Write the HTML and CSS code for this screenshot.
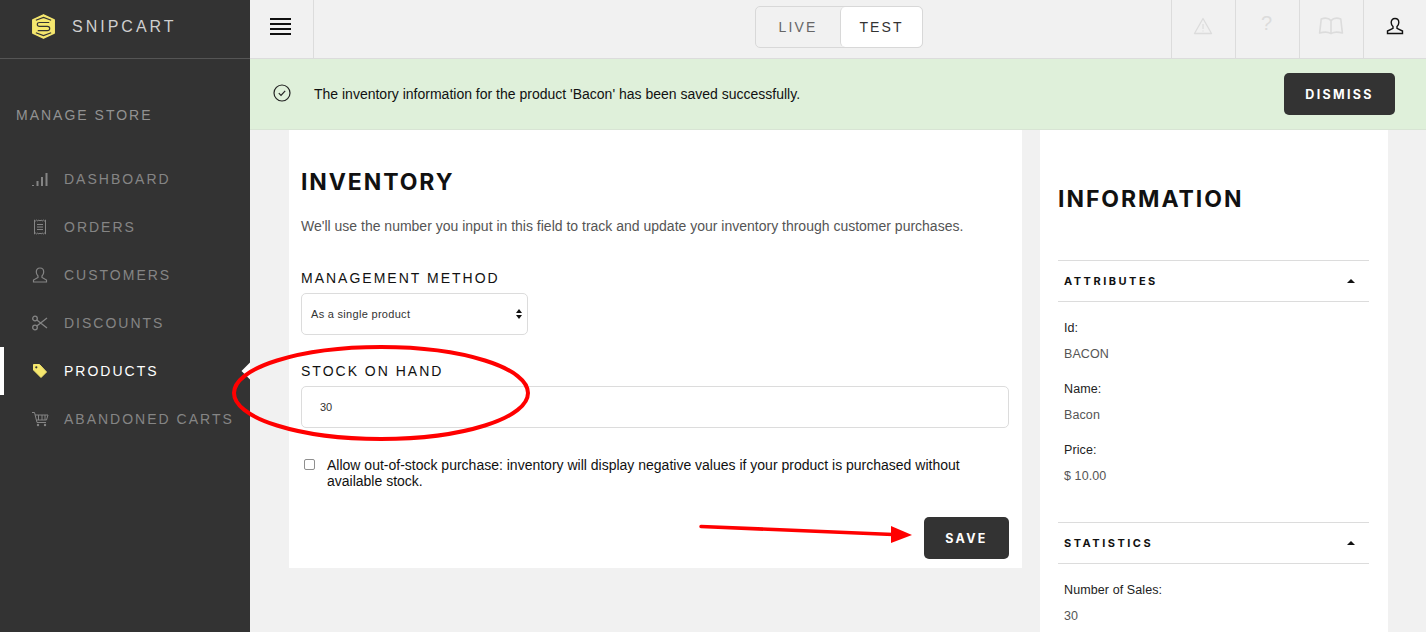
FILE: index.html
```html
<!DOCTYPE html>
<html lang="en">
<head>
<meta charset="utf-8">
<title>Snipcart</title>
<link rel="stylesheet" href="styles.css">
</head>
<body>
<div class="app">
  <aside class="sidebar">
    <div class="brand">
      <svg class="brand-logo" viewBox="0 0 24 26" width="23" height="25"><path d="M12 0.800 L23.200 6.200 V19.800 L12 25.200 L0.800 19.800 V6.200 Z" fill="#f5e76e" stroke="#f5e76e" stroke-width="1.500" stroke-linejoin="round"/><path d="M18 8.800 H8 Q5.500 8.800 5.500 10.800 Q5.500 12.800 8 12.800 H16 Q18.500 12.800 18.500 15 Q18.500 17.300 16 17.300 H6 M4 6.500 L12 3.500 L20 6.500 M4 19.500 L12 22.500 L20 19.500" fill="none" stroke="#333" stroke-width="1.200"/></svg>
      <span class="brand-name">SNIPCART</span>
    </div>
    <div class="side-title">MANAGE STORE</div>
    <nav class="nav">
      <a class="nav-item"><svg class="nav-icon" viewBox="0 0 18 18"><path d="M2 15v1M6.500 11v5M11 7v9M15.500 3v13" stroke="currentColor" stroke-width="2" fill="none"/></svg>DASHBOARD</a>
      <a class="nav-item"><svg class="nav-icon" viewBox="0 0 18 18"><path d="M3.500 2l1.100 1 1.100-1 1.100 1 1.100-1 1.100 1 1.100-1 1.100 1 1.100-1 1.100 1 1.100-1v14l-1.100-1-1.100 1-1.100-1-1.100 1-1.100-1-1.100 1-1.100-1-1.100 1-1.100-1-1.100 1z M6 6.500h6M6 9h6M6 11.500h6" fill="none" stroke="currentColor" stroke-width="1"/></svg>ORDERS</a>
      <a class="nav-item"><svg class="nav-icon" viewBox="0 0 18 18"><path d="M9 2c-2.500 0-3.700 1.800-3.700 4 0 1.800.7 3 1.700 4v1.500L2.500 14v2h13v-2L11 11.500V10c1-1 1.700-2.200 1.700-4 0-2.200-1.200-4-3.700-4z" fill="none" stroke="currentColor" stroke-width="1.200"/></svg>CUSTOMERS</a>
      <a class="nav-item"><svg class="nav-icon" viewBox="0 0 18 18"><circle cx="4" cy="4.500" r="2.300" fill="none" stroke="currentColor" stroke-width="1.300"/><circle cx="4" cy="13.500" r="2.300" fill="none" stroke="currentColor" stroke-width="1.300"/><path d="M5.800 6L16 14M5.800 12L16 4" stroke="currentColor" stroke-width="1.300" fill="none"/></svg>DISCOUNTS</a>
      <a class="nav-item nav-active"><svg class="nav-icon" viewBox="0 0 18 18"><path d="M2.500 2.500h6l7 7.500-5.500 5.500-7.500-7.500z" fill="#f5e76e" stroke="#f5e76e" stroke-linejoin="round"/><circle cx="5.300" cy="5.300" r="1.100" fill="#333"/></svg>PRODUCTS</a>
      <a class="nav-item"><svg class="nav-icon" viewBox="0 0 18 18"><path d="M1 2.500h2.500L6 12.500h9M4 5h13l-1.500 5H5.500M7.500 5v5M11 5v5M14 5v5" fill="none" stroke="currentColor" stroke-width="1"/><circle cx="7" cy="15" r="1.200" fill="currentColor"/><circle cx="14" cy="15" r="1.200" fill="currentColor"/></svg>ABANDONED CARTS</a>
    </nav>
  </aside>
  <div class="main">
    <header class="topbar">
      <button class="burger" aria-label="Menu"><span></span><span></span><span></span><span></span></button>
      <div class="switch"><span class="switch-opt">LIVE</span><span class="switch-opt switch-on">TEST</span></div>
      <div class="top-icons">
        <div class="top-icon"><svg viewBox="0 0 20 20" width="20" height="20"><path d="M10 2.500L18.500 17.500H1.500Z" fill="none" stroke="#dcdcdc" stroke-width="1.300" stroke-linejoin="round"/><path d="M10 8v5M10 14.500v1" stroke="#dcdcdc" stroke-width="1.200"/></svg></div>
        <div class="top-icon top-q">?</div>
        <div class="top-icon"><svg viewBox="0 0 24 20" width="26" height="22"><path d="M12 5C10 2.800 6 2.500 3 3.500L1.500 16.500C5 15.500 9.500 15.500 12 17 14.500 15.500 19 15.500 22.500 16.500L21 3.500C18 2.500 14 2.800 12 5ZM12 5V17" fill="none" stroke="#dcdcdc" stroke-width="1.500" stroke-linejoin="round"/></svg></div>
        <div class="top-icon"><svg viewBox="0 0 18 18" width="18" height="18"><path d="M9 1.500c-2.600 0-3.800 1.800-3.800 4 0 1.900.7 3.100 1.800 4.100v1.700L1.500 14v2.500h15V14L11 11.300V9.600c1.100-1 1.800-2.200 1.800-4.100 0-2.200-1.200-4-3.800-4z" fill="none" stroke="#111" stroke-width="1.400"/></svg></div>
      </div>
    </header>
    <div class="alert">
      <svg class="alert-icon" viewBox="0 0 18 18" width="18" height="18"><circle cx="9" cy="9" r="8" fill="none" stroke="#222" stroke-width="1.200"/><path d="M5.800 9.200l2.200 2.200 4.200-4.600" fill="none" stroke="#222" stroke-width="1.200"/></svg>
      <p class="alert-text">The inventory information for the product 'Bacon' has been saved successfully.</p>
      <button class="btn">DISMISS</button>
    </div>
    <div class="content">
      <section class="card inventory">
        <h1 class="title">INVENTORY</h1>
        <p class="lead">We'll use the number you input in this field to track and update your inventory through customer purchases.</p>
        <label class="field-label">MANAGEMENT METHOD</label>
        <div class="select"><span>As a single product</span><svg viewBox="0 0 6 10" width="6" height="10"><path d="M3 0L6 4H0ZM3 10L0 6H6Z" fill="#111"/></svg></div>
        <label class="field-label field-stock">STOCK ON HAND</label>
        <div class="input">30</div>
        <label class="check"><span class="box"></span><span>Allow out-of-stock purchase: inventory will display negative values if your product is purchased without available stock.</span></label>
        <div class="actions"><button class="btn btn-save">SAVE</button></div>
      </section>
      <section class="card info">
        <h2 class="info-title">INFORMATION</h2>
        <div class="acc-head"><span>ATTRIBUTES</span><i class="caret"></i></div>
        <dl class="acc-body">
          <dt>Id:</dt><dd>BACON</dd>
          <dt>Name:</dt><dd>Bacon</dd>
          <dt>Price:</dt><dd>$ 10.00</dd>
        </dl>
        <div class="acc-head"><span>STATISTICS</span><i class="caret"></i></div>
        <dl class="acc-body">
          <dt>Number of Sales:</dt><dd>30</dd>
        </dl>
      </section>
    </div>
  </div>
</div>
<svg class="marks" viewBox="0 0 1426 632" width="1426" height="632">
  <path d="M241.500 371 L250 362.500 V379.500 Z" fill="#fff"/>
  <ellipse cx="381" cy="393" rx="147" ry="46" fill="none" stroke="#f00" stroke-width="4"/>
  <path d="M701 526.500 L893 534.500" stroke="#f00" stroke-width="3.500" stroke-linecap="round"/>
  <path d="M891 526 L912 535 L891 543 Z" fill="#f00"/>
</svg>
</body>
</html>
```
FILE: styles.css
```css
* { box-sizing: border-box; }
html, body { margin: 0; height: 632px; overflow: hidden; }
body { font-family: "Liberation Sans", Arial, sans-serif; background: #f1f1f1; color: #111; position: relative; }
.app { display: flex; height: 632px; }

.sidebar { width: 250px; flex: none; background: #333; color: #858585; }
.brand { height: 59px; border-bottom: 1px solid #555; display: flex; align-items: center; padding: 0 0 5px 32px; }
.brand-logo { flex: none; }
.brand-name { margin-left: 17px; font-size: 16px; letter-spacing: 3px; color: #cfcfcf; }
.side-title { margin: 48px 0 0 16px; font-size: 14px; letter-spacing: 2px; line-height: 16px; color: #929292; }
.nav { margin-top: 32px; }
.nav-item { display: flex; align-items: center; height: 48px; padding-left: 31px; font-size: 14px; letter-spacing: 2px; color: #858585; }
.nav-icon { width: 18px; height: 18px; margin-right: 15px; flex: none; color: #858585; }
.nav-active { color: #fff; border-left: 4px solid #fff; padding-left: 27px; }

.main { flex: 1; min-width: 0; display: flex; flex-direction: column; }
.topbar { height: 59px; flex: none; border-bottom: 1px solid #dcdcdc; display: flex; align-items: stretch; position: relative; }
.burger { width: 64px; background: none; border: 0; border-right: 1px solid #dcdcdc; padding: 0 2px 5px 0; display: flex; flex-direction: column; align-items: center; justify-content: center; gap: 3px; }
.burger span { display: block; width: 21px; height: 2px; background: #111; }
.switch { position: absolute; left: 505px; top: 6px; width: 168px; height: 42px; border: 1px solid #d8d8d8; border-radius: 5px; display: flex; font-size: 14px; letter-spacing: 2.1px; }
.switch-opt { width: 84px; display: flex; align-items: center; justify-content: center; color: #666; }
.switch-on { flex: 1; background: #fff; color: #333; border-radius: 5px; border-left: 1px solid #d8d8d8; }
.top-icons { margin-left: auto; display: flex; }
.top-icon { width: 64px; border-left: 1px solid #dcdcdc; display: flex; align-items: center; justify-content: center; padding: 0 2px 6px 0; }
.top-icon:last-child { width: 63px; padding-right: 0; }
.top-q { font-size: 20px; color: #dcdcdc; padding-bottom: 12px; }

.alert { height: 71px; flex: none; background: #dff0da; border-bottom: 1px solid #d8e4d4; display: flex; align-items: center; padding: 0 31px 0 23px; }
.alert-icon { flex: none; margin-right: 23px; margin-top: -3px; }
.alert-text { margin: 0; flex: 1; font-size: 14px; color: #111; }
.btn { background: #333; color: #fff; border: 0; border-radius: 5px; width: 111px; height: 42px; font-family: Inter, sans-serif; font-weight: 700; font-size: 12.500px; letter-spacing: 2.3px; padding: 0; }

.content { flex: 1; min-height: 0; padding-left: 39px; display: flex; align-items: flex-start; gap: 18px; }
.card { background: #fff; }
.inventory { width: 733px; height: 438px; padding: 0 13px 0 12px; }
.title { margin: 38px 0 0; font-family: Inter, sans-serif; font-weight: 700; font-size: 23px; line-height: 28px; letter-spacing: 1.900px; color: #111; }
.lead { margin: 21px 0 0; font-size: 14px; line-height: 18px; color: #555; }
.field-label { display: block; font-size: 14px; line-height: 16px; letter-spacing: 2px; color: #111; }
.lead + .field-label { margin-top: 35px; }
.select { margin-top: 7px; width: 227px; height: 42px; border: 1px solid #dcdcdc; border-radius: 5px; display: flex; align-items: center; justify-content: space-between; padding: 0 5px 0 9px; font-size: 11px; letter-spacing: .3px; color: #333; }
.field-stock { margin-top: 28px; }
.input { margin-top: 7px; width: 708px; height: 42px; border: 1px solid #dcdcdc; border-radius: 5px; display: flex; align-items: center; padding-left: 18px; font-size: 11px; color: #333; }
.check { margin-top: 29px; display: flex; font-size: 14px; line-height: 16px; color: #111; padding-left: 3px; }
.box { flex: none; width: 11px; height: 11px; margin: 2px 12px 0 0; border: 1px solid #8f8f8f; border-radius: 2px; background: #fff; }
.actions { margin-top: 28px; display: flex; justify-content: flex-end; width: 708px; }
.btn-save { width: 85px; }

.info { width: 348px; height: 520px; padding: 0 19px 0 18px; }
.info-title { margin: 55px 0 47px; font-family: Inter, sans-serif; font-weight: 700; font-size: 23px; line-height: 28px; letter-spacing: 1.950px; color: #111; }
.acc-head { height: 42px; border-top: 1px solid #dcdcdc; border-bottom: 1px solid #dcdcdc; display: flex; align-items: center; justify-content: space-between; padding: 0 14px 0 6px; font-family: Inter, sans-serif; font-weight: 700; font-size: 11px; letter-spacing: 2.500px; color: #111; }
.caret { width: 0; height: 0; border: 4px solid transparent; border-top: 0; border-bottom: 4px solid #111; }
.acc-body { margin: 0; padding: 17px 0 0 6px; height: 220px; font-size: 12.500px; letter-spacing: .1px; line-height: 18px; }
.acc-body dt { color: #222; }
.acc-body dd { margin: 8px 0 17px; color: #555; }
.acc-body:last-child { height: auto; }

.marks { position: absolute; left: 0; top: 0; pointer-events: none; }
```
